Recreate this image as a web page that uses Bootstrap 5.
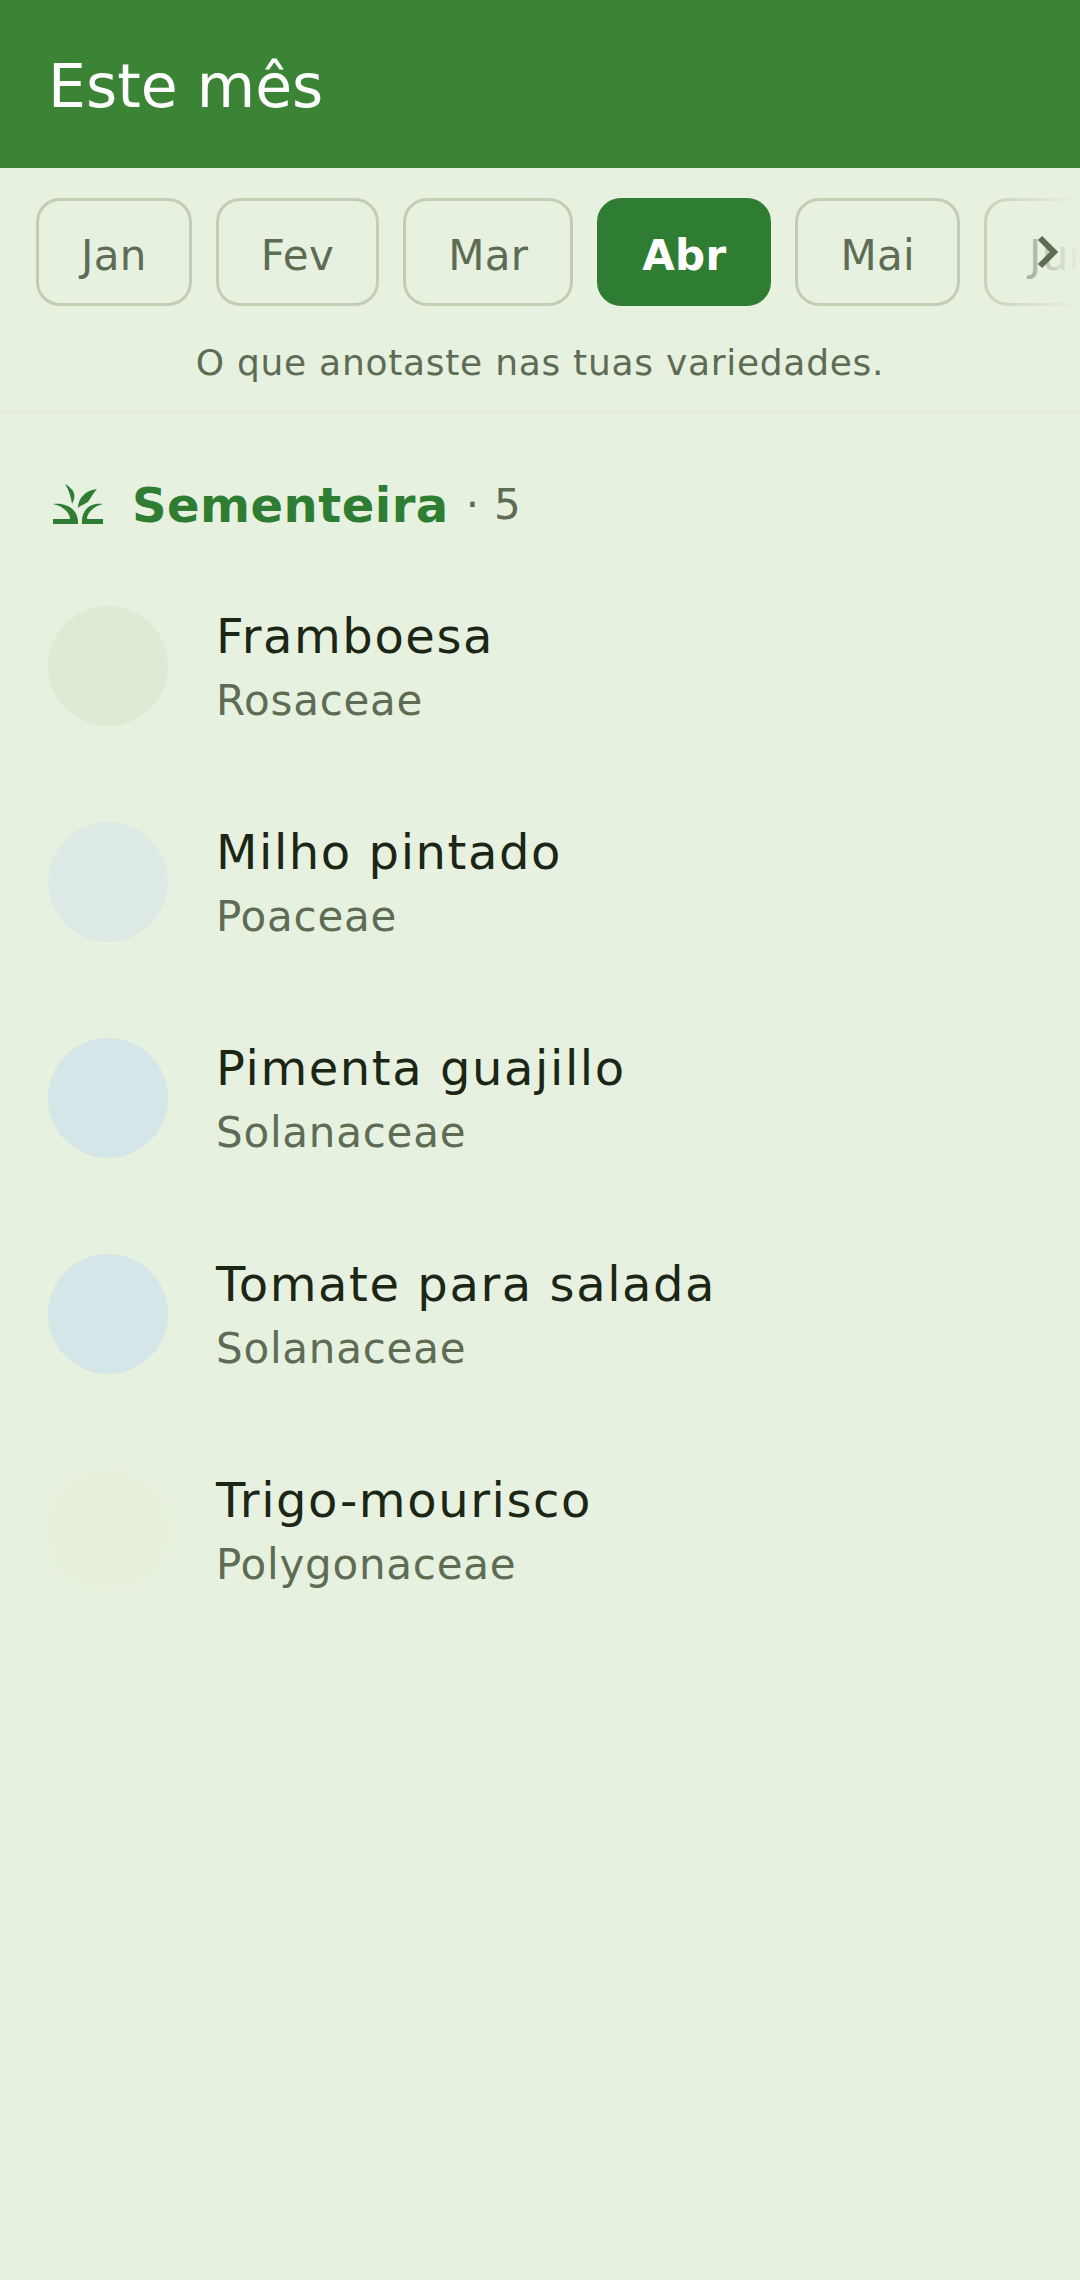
<!DOCTYPE html>
<html lang="pt">
<head>
    <meta charset="UTF-8">
    <meta name="viewport" content="width=device-width, initial-scale=1.0">
    <title>Este mês</title>
    <link href="https://cdn.jsdelivr.net/npm/bootstrap@5.3.0/dist/css/bootstrap.min.css" rel="stylesheet">
    <style>
        html, body {
            height: 100%;
        }
        body {
            background-color: #e7f1e0;
            font-family: "DejaVu Sans", sans-serif;
            min-height: 2280px;
        }
        .top-bar {
            background-color: #3b8335;
            height: 168px;
            padding: 4px 0 0 48px;
        }
        .top-title {
            color: #fff;
            font-size: 60px;
            font-weight: 400;
            line-height: 1;
            margin: 0;
        }
        .month-strip {
            padding: 30px 36px 0;
            gap: 24px;
            overflow: hidden;
        }
        .month-chip {
            flex: none;
            height: 108px;
            padding: 7px 42px 0;
            border: 3px solid #c5ccb6;
            border-radius: 24px;
            background: transparent;
            color: #5f6c54;
            font-size: 42px;
            letter-spacing: 0.3px;
            line-height: 1;
        }
        .month-chip.is-on {
            background-color: #2e7d32;
            border-color: #2e7d32;
            color: #fff;
            font-weight: 700;
        }
        .strip-fade {
            top: 0;
            right: 0;
            width: 110px;
            height: 138px;
            background: linear-gradient(to right, rgba(231, 241, 224, 0), #e7f1e0);
        }
        .strip-arrow {
            top: 66px;
            right: 20px;
        }
        .month-note {
            color: #5f6c54;
            font-size: 36px;
            letter-spacing: 0.72px;
            line-height: 1;
            margin: 0;
            padding: 39px 0 30px;
            border-bottom: 3px solid #e2ebdb;
        }
        .group-head {
            height: 144px;
            padding: 70px 0 0 53px;
        }
        .group-label {
            margin-top: -3px;
        }
        .group-name {
            color: #2e7d32;
            font-size: 48px;
            font-weight: 700;
            letter-spacing: 0.48px;
            line-height: 1;
            margin-left: 29px;
        }
        .group-count {
            color: #5f6c54;
            font-size: 42px;
            letter-spacing: 0.84px;
            line-height: 1;
            margin-left: 17px;
        }
        .plant-row {
            height: 216px;
            padding-left: 48px;
            gap: 48px;
        }
        .plant-dot {
            width: 120px;
            height: 120px;
            flex: none;
            border-radius: 50%;
        }
        .plant-text {
            padding-top: 2px;
        }
        .plant-name {
            color: #1c2615;
            font-size: 48px;
            letter-spacing: 1.58px;
            line-height: 1;
        }
        .plant-family {
            color: #5f6c54;
            font-size: 42px;
            letter-spacing: 0.76px;
            line-height: 1;
            margin-top: 20px;
        }
    </style>
</head>
<body>

    <header class="top-bar d-flex align-items-center">
        <h1 class="top-title">Este mês</h1>
    </header>

    <div class="position-relative">
        <div class="month-strip d-flex">
            <button type="button" class="btn month-chip">Jan</button>
            <button type="button" class="btn month-chip">Fev</button>
            <button type="button" class="btn month-chip">Mar</button>
            <button type="button" class="btn month-chip is-on">Abr</button>
            <button type="button" class="btn month-chip">Mai</button>
            <button type="button" class="btn month-chip">Jun</button>
        </div>
        <div class="strip-fade position-absolute"></div>
        <svg class="strip-arrow position-absolute" width="24" height="36" viewBox="0 0 24 36">
            <path d="M4 4 L18 18 L4 32" fill="none" stroke="#5f6c54" stroke-width="6"/>
        </svg>
    </div>

    <p class="month-note text-center">O que anotaste nas tuas variedades.</p>

    <div class="group-head d-flex align-items-start">
        <svg width="50" height="40" viewBox="0 0 50 40" fill="#2e7d32">
            <path d="M12 0 C19 4 25 10 19 20 C18 13 16 6 12 0 Z"/>
            <path d="M44 5 C33 6 25 14 25 24 C28 21 32 20 35 18 C38 14 40 9 44 5 Z"/>
            <path d="M0 20 C14 18 26 26 25 40 L0 40 L0 35 L17 35 C17 29 10 22 0 20 Z"/>
            <path d="M50 20 C36 18 28 27 29 40 L50 40 L50 35 L34 35 C34 29 41 22 50 20 Z"/>
        </svg>
        <div class="group-label d-flex align-items-center">
            <span class="group-name">Sementeira</span>
            <span class="group-count">· 5</span>
        </div>
    </div>

    <div class="d-flex flex-column">
        <div class="plant-row d-flex align-items-center">
            <div class="plant-dot" style="background-color: #dee9d6"></div>
            <div class="plant-text">
                <div class="plant-name">Framboesa</div>
                <div class="plant-family">Rosaceae</div>
            </div>
        </div>
        <div class="plant-row d-flex align-items-center">
            <div class="plant-dot" style="background-color: #dde9e5"></div>
            <div class="plant-text">
                <div class="plant-name">Milho pintado</div>
                <div class="plant-family">Poaceae</div>
            </div>
        </div>
        <div class="plant-row d-flex align-items-center">
            <div class="plant-dot" style="background-color: #d5e6e8"></div>
            <div class="plant-text">
                <div class="plant-name">Pimenta guajillo</div>
                <div class="plant-family">Solanaceae</div>
            </div>
        </div>
        <div class="plant-row d-flex align-items-center">
            <div class="plant-dot" style="background-color: #d5e6e8"></div>
            <div class="plant-text">
                <div class="plant-name">Tomate para salada</div>
                <div class="plant-family">Solanaceae</div>
            </div>
        </div>
        <div class="plant-row d-flex align-items-center">
            <div class="plant-dot" style="background-color: #e8efda"></div>
            <div class="plant-text">
                <div class="plant-name">Trigo-mourisco</div>
                <div class="plant-family">Polygonaceae</div>
            </div>
        </div>
    </div>

    <script src="https://cdn.jsdelivr.net/npm/bootstrap@5.3.0/dist/js/bootstrap.bundle.min.js"></script>
</body>
</html>
